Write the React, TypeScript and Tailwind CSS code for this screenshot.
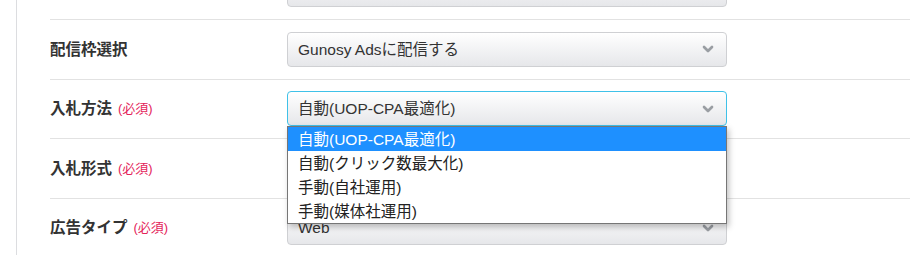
import { ChevronDown } from "lucide-react";

const FONT = { fontFamily: '"Liberation Sans", "Noto Sans CJK JP", sans-serif' };

const OPTIONS = ["自動(UOP-CPA最適化)", "自動(クリック数最大化)", "手動(自社運用)", "手動(媒体社運用)"];

function Select({ value, focused }: { value: string; focused?: boolean }) {
  return (
    <div
      className={`relative flex h-[35px] w-[440px] shrink-0 items-center rounded-[4px] border bg-gradient-to-b from-white to-[#e6e7ea] pl-[10px] text-[15.5px] text-[#333] ${
        focused ? "border-[#3fc1e8]" : "border-[#cfd0d3]"
      }`}
    >
      <span>{value}</span>
      <ChevronDown className="absolute right-[10px] top-1/2 h-[16px] w-[16px] -translate-y-1/2 text-[#9a9ea3]" strokeWidth={4} />
    </div>
  );
}

function Row({ label, required, children }: { label: string; required?: boolean; children: React.ReactNode }) {
  return (
    <div className="flex h-[59.5px] items-center border-t border-[#e2e2e2]">
      <div className="flex w-[237px] items-center text-[15.5px] font-bold text-[#333]">
        {label}
        {required && <span className="ml-[6px] text-[13px] font-normal text-[#e4245a]">(必須)</span>}
      </div>
      {children}
    </div>
  );
}

export default function App() {
  return (
    <div className="h-[255px] w-[910px] overflow-hidden bg-white" style={FONT}>
      <div className="ml-4 h-full border-l border-[#dcdde0] pl-[33px]">
        {/* previous field, cut off at the top */}
        <div className="flex h-[19px] items-end overflow-hidden pb-3 pl-[237px]">
          <Select value="" />
        </div>
        <Row label="配信枠選択">
          <Select value="Gunosy Adsに配信する" />
        </Row>
        <Row label="入札方法" required>
          <div className="relative">
            <Select value="自動(UOP-CPA最適化)" focused />
            <div className="absolute left-0 top-[35px] z-10 w-[440px] border border-[#767676] bg-white shadow-[2px_3px_6px_rgba(0,0,0,0.25)]">
              {OPTIONS.map((o, i) => (
                <div
                  key={o}
                  className={`flex h-[24px] items-center pl-[10px] text-[15.5px] ${
                    i === 0 ? "bg-[#1e90ff] text-white" : "text-[#222]"
                  }`}
                >
                  {o}
                </div>
              ))}
            </div>
          </div>
        </Row>
        <Row label="入札形式" required>
          <Select value="" />
        </Row>
        <Row label="広告タイプ" required>
          <Select value="Web" />
        </Row>
      </div>
    </div>
  );
}
